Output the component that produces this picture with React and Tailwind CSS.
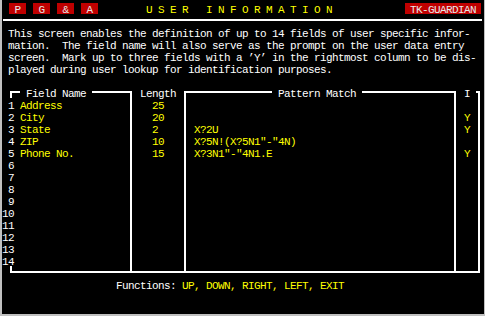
import React from 'react';

// One screen cell is 6px wide and 12px tall (80 x 26 character grid)
const Y = 'text-[#ffff00]';

const fields = [
  { name: 'Address', len: '25', pat: '', id: '' },
  { name: 'City', len: '20', pat: '', id: 'Y' },
  { name: 'State', len: '2', pat: 'X?2U', id: 'Y' },
  { name: 'ZIP', len: '10', pat: 'X?5N!(X?5N1"-"4N)', id: '' },
  { name: 'Phone No.', len: '15', pat: 'X?3N1"-"4N1.E', id: 'Y' },
];

// box drawing pieces
const VLine = () => (
  <div className="w-[6px] flex justify-center shrink-0">
    <div className="w-[2px] bg-white" />
  </div>
);
const DownLeft = () => (
  <div className="w-[6px] shrink-0">
    <div className="mt-[5px] w-[4px] h-[7px] border-t-2 border-r-2 border-white" />
  </div>
);
const DownRight = () => (
  <div className="w-[6px] shrink-0">
    <div className="mt-[5px] ml-[2px] w-[4px] h-[7px] border-t-2 border-l-2 border-white" />
  </div>
);
const UpRight = () => (
  <div className="w-[6px] shrink-0">
    <div className="ml-[2px] w-[4px] h-[7px] border-b-2 border-l-2 border-white" />
  </div>
);
const UpLeft = () => (
  <div className="w-[6px] shrink-0">
    <div className="w-[4px] h-[7px] border-b-2 border-r-2 border-white" />
  </div>
);
const UpBoth = () => (
  <div className="w-[6px] shrink-0 flex flex-col">
    <div className="h-[5px] w-[2px] ml-[2px] bg-white" />
    <div className="h-[2px] bg-white" />
  </div>
);

const Row = ({ children }) => <div className="flex h-[12px]">{children}</div>;

const App = () => {
  const numbers = Array.from({ length: 14 }, (_, i) => i + 1);

  return (
    <div className="w-[485px] h-[316px] bg-[#c0c0c0] pl-[2px] pr-[1px] pb-[2px] font-['Liberation_Mono',monospace] text-[11px] leading-[12px] tracking-[-0.6px] text-white">
      <div className="w-[482px] h-[314px] bg-black pt-[2px] overflow-hidden">
        {/* Title bar */}
        <div className="flex h-[12px] items-start">
          <div className="ml-[7px] mt-[1px] w-[17px] h-[11px] bg-[#c00000] text-[#e8e8e8] flex justify-center pt-[1px]">P</div>
          <div className="ml-[7px] mt-[1px] w-[17px] h-[11px] bg-[#c00000] text-[#e8e8e8] flex justify-center pt-[1px]">G</div>
          <div className="ml-[7px] mt-[1px] w-[17px] h-[11px] bg-[#c00000] text-[#e8e8e8] flex justify-center pt-[1px]">&amp;</div>
          <div className="ml-[7px] mt-[1px] w-[17px] h-[11px] bg-[#c00000] text-[#e8e8e8] flex justify-center pt-[1px]">A</div>
          <div className={`ml-[48px] pt-[2px] whitespace-pre ${Y}`}>U S E R   I N F O R M A T I O N</div>
          <div className="ml-[73px] mt-[1px] w-[76px] h-[11px] bg-[#c00000] text-[#e8e8e8] pl-[5px] pt-[1px]">TK-GUARDIAN</div>
        </div>

        {/* Divider */}
        <Row>
          <div className="ml-[1px] mt-[5px] w-[479px] h-[2px] bg-white" />
        </Row>

        {/* Intro text */}
        <div className="pl-[6px] whitespace-pre">
          <div className="h-[12px] pt-[2px]">This screen enables the definition of up to 14 fields of user specific infor-</div>
          <div className="h-[12px] pt-[2px]">mation.  The field name will also serve as the prompt on the user data entry</div>
          <div className="h-[12px] pt-[2px]">screen.  Mark up to three fields with a ’Y’ in the rightmost column to be dis-</div>
          <div className="h-[12px] pt-[2px]">played during user lookup for identification purposes.</div>
        </div>
        <Row />

        {/* Table header */}
        <Row>
          <div className="w-[6px] shrink-0" />
          <DownRight />
          <div className="w-[6px] h-[2px] mt-[5px] bg-white shrink-0" />
          <div className="w-[72px] pt-[2px] whitespace-pre shrink-0"> Field Name </div>
          <div className="w-[36px] h-[2px] mt-[5px] bg-white shrink-0" />
          <DownLeft />
          <div className="w-[48px] pt-[2px] whitespace-pre shrink-0"> Length </div>
          <DownRight />
          <div className="w-[84px] h-[2px] mt-[5px] bg-white shrink-0" />
          <div className="w-[90px] pt-[2px] whitespace-pre shrink-0"> Pattern Match </div>
          <div className="w-[90px] h-[2px] mt-[5px] bg-white shrink-0" />
          <DownLeft />
          <div className="w-[18px] pt-[2px] whitespace-pre shrink-0"> I </div>
          <DownLeft />
        </Row>

        {/* Table rows */}
        {numbers.map((n) => {
          const f = fields[n - 1];
          return (
            <Row key={n}>
              <div className="w-[12px] pt-[2px] text-right shrink-0">{n}</div>
              <div className={`w-[114px] pl-[6px] pt-[2px] whitespace-pre shrink-0 ${Y}`}>{f ? f.name : ''}</div>
              <VLine />
              <div className={`w-[48px] pl-[18px] pt-[2px] whitespace-pre shrink-0 ${Y}`}>{f ? f.len : ''}</div>
              <VLine />
              <div className={`w-[264px] pl-[6px] pt-[2px] whitespace-pre shrink-0 ${Y}`}>{f ? f.pat : ''}</div>
              <VLine />
              <div className={`w-[18px] pl-[6px] pt-[2px] shrink-0 ${Y}`}>{f ? f.id : ''}</div>
              <VLine />
            </Row>
          );
        })}

        {/* Table bottom */}
        <Row>
          <div className="w-[6px] shrink-0" />
          <UpRight />
          <div className="w-[114px] h-[2px] mt-[5px] bg-white shrink-0" />
          <UpBoth />
          <div className="w-[48px] h-[2px] mt-[5px] bg-white shrink-0" />
          <UpBoth />
          <div className="w-[264px] h-[2px] mt-[5px] bg-white shrink-0" />
          <UpBoth />
          <div className="w-[18px] h-[2px] mt-[5px] bg-white shrink-0" />
          <UpLeft />
        </Row>

        {/* Functions */}
        <div className="h-[12px] pt-[2px] pl-[114px] whitespace-pre">
          Functions: <span className={Y}>UP, DOWN, RIGHT, LEFT, EXIT</span>
        </div>
      </div>
    </div>
  );
};

export default App;
